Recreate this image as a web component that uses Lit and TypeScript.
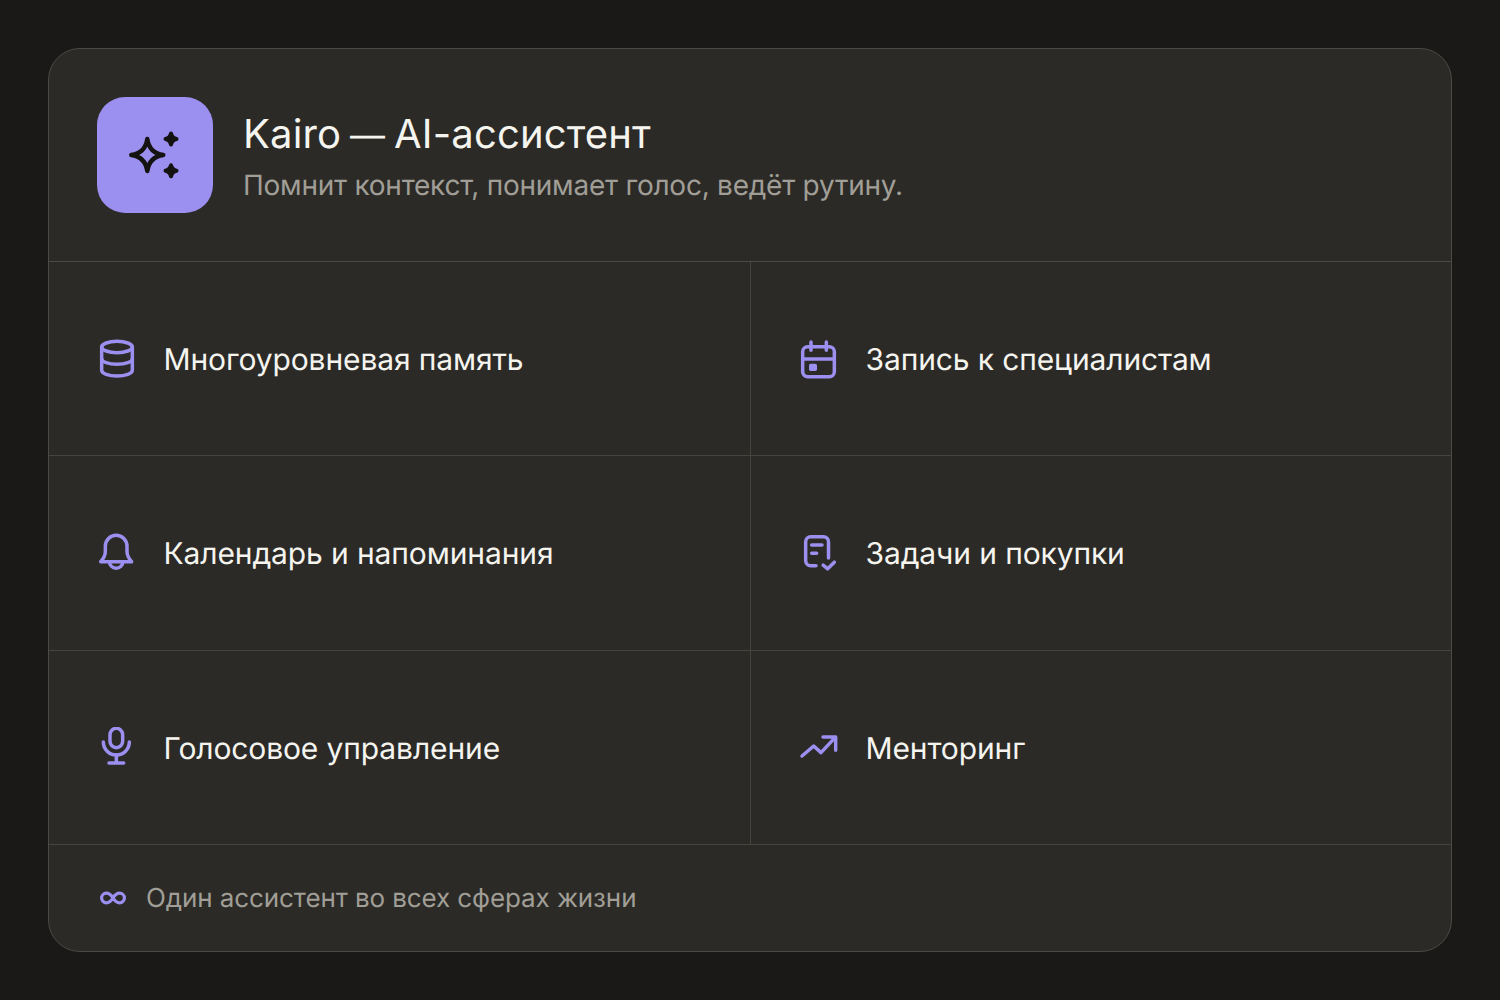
import { LitElement, html, css, svg } from "lit";
import { customElement } from "lit/decorators.js";

const features = [
  {
    label: "Многоуровневая память",
    icon: svg`<ellipse cx="12" cy="4.800" rx="9.200" ry="3.400"/><path d="M2.800 4.800v14c0 1.900 4.100 3.400 9.200 3.400s9.200-1.500 9.200-3.400v-14"/><path d="M2.800 11.800c0 1.900 4.100 3.400 9.200 3.400s9.200-1.500 9.200-3.400"/>`,
  },
  {
    label: "Запись к специалистам",
    icon: svg`<rect x="2.200" y="4.600" width="19" height="18" rx="3"/><path d="M7.200 1.800v5M16.400 1.800v5M2.200 12h19"/><rect x="6" y="14.800" width="4.800" height="4.400" rx="1" class="solid"/>`,
  },
  {
    label: "Календарь и напоминания",
    icon: svg`<path d="M2.200 17.200c1.700-1.700 2.800-3.700 2.800-6.200V7.900a6.500 6.500 0 0 1 13 0V11c0 2.500 1.100 4.500 2.800 6.200z"/><path d="M7.500 17.200a4 4 0 0 0 8 0"/>`,
  },
  {
    label: "Задачи и покупки",
    icon: svg`<path d="M10.200 19.700H7a3 3 0 0 1-3-3V5.200a3 3 0 0 1 3-3h7.700a3 3 0 0 1 3 3V15"/><path d="M7.600 7.200h6.200M7.600 12.200h3"/><path d="M14.500 19.300l2.700 2.200 4-4"/>`,
  },
  {
    label: "Голосовое управление",
    icon: svg`<rect x="7.800" y=".8" width="7.600" height="11.600" rx="3.800"/><path d="M3.800 9a7.800 7.800 0 0 0 15.600 0"/><path d="M11.600 16.800v4.800M7.200 21.600H16"/>`,
  },
  {
    label: "Менторинг",
    icon: svg`<path d="M1.800 17.400l7-6 4.400 4 8.400-9"/><path d="M14.400 6H22v8"/>`,
  },
];

const star = (x: number, y: number, r: number, k: number) =>
  `M${x} ${y - r}Q${x + k} ${y - k} ${x + r} ${y}Q${x + k} ${y + k} ${x} ${y + r}Q${x - k} ${y + k} ${x - r} ${y}Q${x - k} ${y - k} ${x} ${y - r}Z`;

@customElement("app-root")
export class AppRoot extends LitElement {
  protected render() {
    return html`
      <div class="card">
        <header class="head">
          <div class="logo">
            <svg viewBox="0 0 64 64" width="64" height="64">
              <path class="big" d=${star(24.3, 32, 16, 2)} />
              <path class="small" d=${star(48, 16, 5.5, 1)} />
              <path class="small" d=${star(48, 47.7, 5.5, 1)} />
            </svg>
          </div>
          <div class="titles">
            <h1>Kairo <span class="dash">—</span> AI-ассистент</h1>
            <p>Помнит контекст, понимает голос, ведёт рутину.</p>
          </div>
        </header>
        <div class="grid">
          ${features.map(
            (f) => html`
              <div class="cell">
                <svg class="icon" viewBox="0 0 24 24" width="40" height="40">${f.icon}</svg>
                <span>${f.label}</span>
              </div>
            `
          )}
        </div>
        <footer class="foot">
          <svg class="inf" viewBox="0 0 28 16" width="28" height="16">
            <path
              d="M14 8c-1.800-2.900-3.700-4.800-6.600-4.800a4.800 4.800 0 0 0 0 9.600c2.900 0 4.800-1.900 6.600-4.800 1.800-2.900 3.700-4.800 6.600-4.800a4.800 4.800 0 0 1 0 9.600c-2.900 0-4.800-1.900-6.600-4.800z"
            />
          </svg>
          <span>Один ассистент во всех сферах жизни</span>
        </footer>
      </div>
    `;
  }

  static styles = css`
    :host {
      display: block;
      box-sizing: border-box;
      width: 1500px;
      height: 1000px;
      padding: 48px;
      background: #1a1918;
      font-family: Inter, "Noto Sans", sans-serif;
      text-rendering: geometricPrecision;
    }

    .card {
      box-sizing: border-box;
      height: 904px;
      display: flex;
      flex-direction: column;
      background: #2b2a26;
      border: 1px solid #4b4a46;
      border-radius: 32px;
      overflow: hidden;
    }

    .head {
      display: flex;
      align-items: center;
      gap: 30px;
      height: 212px;
      padding: 0 48px;
      border-bottom: 1px solid #4b4a46;
    }

    .logo {
      flex: none;
      width: 116px;
      height: 116px;
      border-radius: 28px;
      background: #9b8ff0;
      display: flex;
      align-items: center;
      justify-content: center;
    }

    .big {
      fill: none;
      stroke: #141312;
      stroke-width: 4.500;
      stroke-linejoin: round;
    }

    .small {
      fill: #141312;
      stroke: #141312;
      stroke-width: 4;
      stroke-linejoin: round;
    }

    .titles {
      display: flex;
      flex-direction: column;
      gap: 7px;
      margin-top: 3px;
    }

    h1 {
      margin: 0;
      font-size: 40px;
      line-height: 48px;
      font-weight: 400;
      letter-spacing: 0.15px;
      word-spacing: -2.500px;
      color: #f5f4ef;
    }

    .dash {
      font-size: 35px;
    }

    p {
      margin: 0;
      font-size: 28px;
      line-height: 36px;
      letter-spacing: -0.24px;
      color: #a09e96;
    }

    .grid {
      display: grid;
      grid-template-columns: 702px 1fr;
      grid-auto-rows: 194.330px;
      flex: none;
    }

    .cell {
      display: flex;
      align-items: center;
      gap: 26.500px;
      padding: 0 0 0 48px;
      border-bottom: 1px solid #45443f;
      font-size: 30px;
      letter-spacing: -0.12px;
      color: #f5f4ef;
    }

    .cell:nth-child(odd) {
      border-right: 1px solid #45443f;
    }

    .cell span {
      margin-top: 3px;
    }

    .icon {
      flex: none;
      fill: none;
      stroke: #9b8ff0;
      stroke-width: 2.100;
      stroke-linecap: round;
      stroke-linejoin: round;
    }

    .icon .solid {
      fill: #9b8ff0;
      stroke: none;
    }

    .foot {
      flex: 1;
      display: flex;
      align-items: center;
      gap: 19px;
      padding: 0 0 0 50px;
      font-size: 26px;
      letter-spacing: -0.1px;
      color: #a09e96;
    }

    .foot span {
      margin-top: 2px;
    }

    .inf {
      flex: none;
      fill: none;
      stroke: #9b8ff0;
      stroke-width: 3.200;
    }
  `;
}

declare global {
  interface HTMLElementTagNameMap {
    "app-root": AppRoot;
  }
}
